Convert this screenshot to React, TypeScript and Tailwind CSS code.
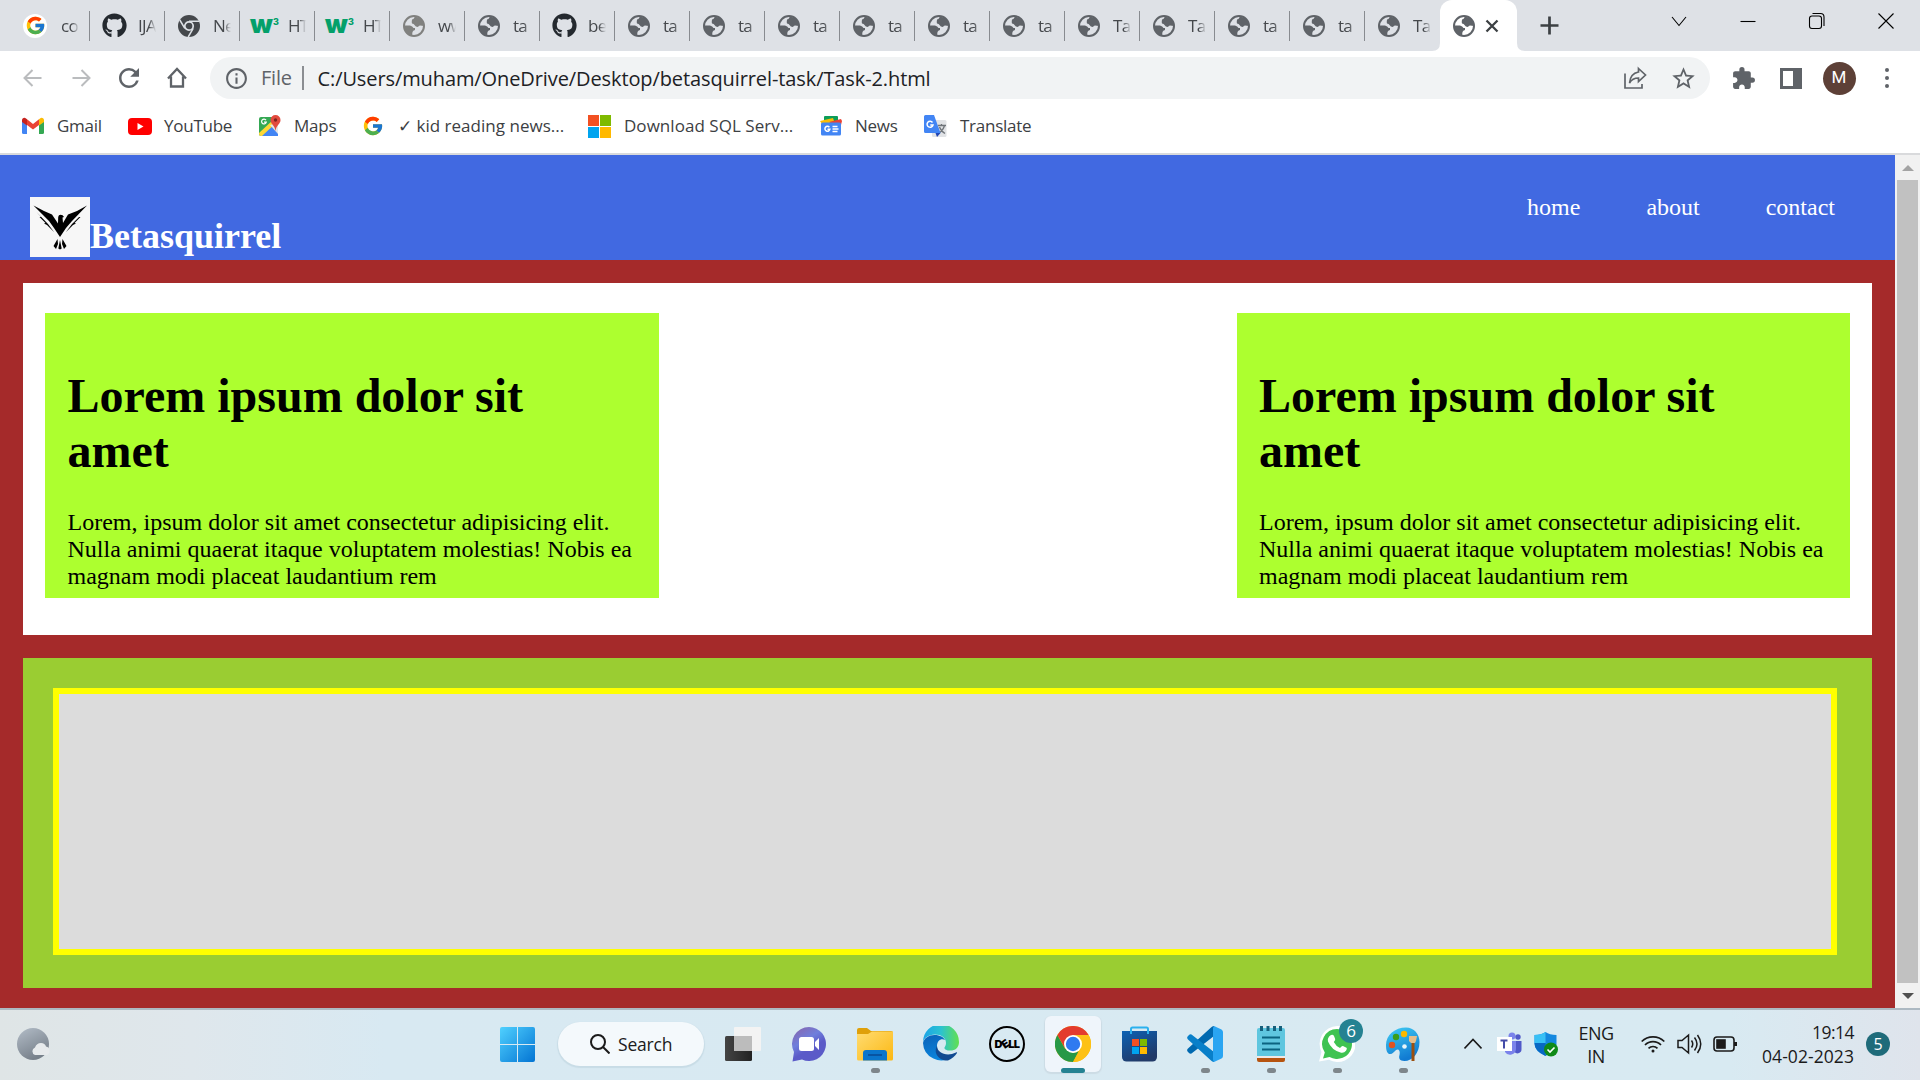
import React from "react";
import { FaGithub } from "react-icons/fa";
import { FcGoogle } from "react-icons/fc";
import { MdRefresh, MdInfoOutline, MdStarBorder, MdExtension } from "react-icons/md";

const ui = "font-['Open_Sans','Noto_Sans',sans-serif]";

function ChromeGrey() {
  return (
    <svg width="22" height="22" viewBox="0 0 22 22">
      <circle cx="11" cy="11" r="11" fill="#45484c" />
      <circle cx="11" cy="11" r="4.2" fill="#45484c" stroke="#dee1e6" strokeWidth="1.7" />
      <path d="M11 6.2H21M6.8 13.4L1.8 5M15.2 13.4L10.2 22" stroke="#dee1e6" strokeWidth="1.5" fill="none" />
    </svg>
  );
}

function Globe({ color = "#5f6368", land = "#dee1e6" }: { color?: string; land?: string }) {
  return (
    <svg className="shrink-0" width="22" height="22" viewBox="0 0 22 22">
      <circle cx="11" cy="11" r="10" fill={land} stroke={color} strokeWidth="2" />
      <path d="M12 1.500q-1 2.500-3 3Q8.500 7 9 8.500q2 0 2.500 1.500 1 2 3.500 2 .5-1.500 2-1.500l4 .5Q20.500 3 12 1.500z" fill={color} />
      <path d="M1.500 10.500h5.500q2.500.5 3.500 2.500h1.500v2q-2 .5-2.500 2l-.5 3.500Q1 18 1.500 10.500z" fill={color} />
    </svg>
  );
}

function W3() {
  return (
    <span className="relative flex h-6 w-6 items-center text-[#04a06a] font-[Inter,sans-serif]">
      <span className="-mt-[3px] -ml-[2px] text-[26px] leading-none font-black tracking-tighter">w</span>
      <span className="absolute -right-[3px] top-[3px] text-[9px] leading-none font-extrabold">3</span>
    </span>
  );
}

const globe = <Globe />;
const hub = <FaGithub size={25} color="#24292f" />;

const tabs: { icon: React.ReactNode; text: string }[] = [
  { icon: <span className="-ml-1.5 flex size-6 items-center justify-center rounded-full bg-white"><FcGoogle size={21} /></span>, text: "co" },
  { icon: hub, text: "IJA" },
  { icon: <ChromeGrey />, text: "Ne" },
  { icon: <W3 />, text: "HT" },
  { icon: <W3 />, text: "HT" },
  { icon: <Globe color="#80817f" />, text: "ww" },
  { icon: globe, text: "ta" },
  { icon: hub, text: "be" },
  { icon: globe, text: "ta" },
  { icon: globe, text: "ta" },
  { icon: globe, text: "ta" },
  { icon: globe, text: "ta" },
  { icon: globe, text: "ta" },
  { icon: globe, text: "ta" },
  { icon: globe, text: "Ta" },
  { icon: globe, text: "Ta" },
  { icon: globe, text: "ta" },
  { icon: globe, text: "ta" },
  { icon: globe, text: "Ta" },
];

function TabStrip() {
  return (
    <div className="flex h-[51px] bg-[#dee1e6] pl-[15px]">
      {tabs.map((t, i) => (
        <div key={i} className="flex h-[51px] w-[75px] shrink-0 items-center">
          <div className={i === 0 ? "flex w-[46px] shrink-0 items-center justify-center" : "flex w-[48px] shrink-0 items-center justify-center"}>{t.icon}</div>
          <div className="w-[18px] shrink-0 overflow-hidden whitespace-nowrap text-[17px] tracking-[-0.7px] text-[#45484c] [mask-image:linear-gradient(90deg,#000_60%,transparent)]">
            {t.text}
          </div>
          <div className={i === 18 ? "hidden" : "ml-auto h-[30px] w-[1.5px] bg-[#888b90]"} />
        </div>
      ))}
      <div className="relative flex w-[77px] shrink-0 items-center rounded-t-xl bg-white pl-[13px]">
        <svg className="absolute bottom-0 -left-2" width="8" height="8"><path d="M8 0V8H0Q8 8 8 0" fill="#fff" /></svg>
        <svg className="absolute bottom-0 -right-2" width="8" height="8"><path d="M0 0V8H8Q0 8 0 0" fill="#fff" /></svg>
        <Globe land="#ffffff" />
        <svg className="ml-[10px]" width="14" height="14" viewBox="0 0 14 14"><path d="M1.5 1.5l11 11M12.5 1.5l-11 11" stroke="#3c4043" strokeWidth="2.3" /></svg>
      </div>
      <svg className="mt-4 ml-[23px]" width="19" height="19"><path d="M9.5 0.5v18M.5 9.5h18" stroke="#3c4043" strokeWidth="2.7" /></svg>
      <div className="mt-[6px] ml-auto flex h-[30px] text-black">
        {["M2 8l7 8.500 7-8.500", "M1.500 12.500h15", "", "M1.500 4.500l15 15M16.500 4.500l-15 15"].map((d, i) => (
          <div key={i} className="flex w-[69px] items-center justify-center">
            <svg width="18" height="24" viewBox="0 0 18 24" fill="none" stroke="#000" strokeWidth="1.1">
              {i === 2 ? (
                <>
                  <rect x="1.500" y="7" width="12" height="12.500" rx="2.500" />
                  <path d="M4.500 4.500h8a3.500 3.500 0 0 1 3.500 3.500v9" />
                </>
              ) : <path d={d} />}
            </svg>
          </div>
        ))}
      </div>
    </div>
  );
}

function Toolbar() {
  return (
    <div className="flex h-[54px] items-center bg-white pl-[9px] text-[#5f6368]">
      {["M20.500 12H4M11.500 4L3.500 12l8 8", "M3.500 12H20M12.500 4l8 8-8 8"].map((d) => (
        <div key={d} className="flex w-12 justify-center">
          <svg width="24" height="24" fill="none" stroke="#babcbe" strokeWidth="2"><path d={d} /></svg>
        </div>
      ))}
      <div className="flex w-12 justify-center"><MdRefresh size={30} /></div>
      <div className="flex w-12 justify-center">
        <svg width="24" height="24" fill="none" stroke="#5f6368" strokeWidth="2.300"><path d="M3 12.500L12 3l9 9.500M6 10.500V20.500h12V10.500" /></svg>
      </div>
      <div className="ml-[9px] flex h-[42px] w-[1500px] items-center rounded-full bg-[#f1f3f4] pl-[14px]">
        <MdInfoOutline size={25} />
        <span className="ml-[12px] w-[31px] text-[20px] tracking-[-0.2px]">File</span>
        <span className="ml-[10px] h-6 w-[1.5px] bg-[#8b8e92]" />
        <span className="ml-[14px] mt-px whitespace-nowrap text-[20px] tracking-[-0.1px] text-[#202124]">
          C:/Users/muham/OneDrive/Desktop/betasquirrel-task/Task-2.html
        </span>
        <div className="ml-auto flex items-center pr-[3px]">
          <div className="flex w-12 justify-center">
            <svg width="25" height="24" viewBox="0 0 25 24" fill="none" stroke="#5f6368" strokeWidth="1.700">
              <path d="M2 7.500V22h17v-4M15.500 2.500l7 6.500-7 6.500V12c-4.500 0-7 1.500-9 5 .5-6 3.500-10 9-11z" />
            </svg>
          </div>
          <div className="flex w-12 justify-center"><MdStarBorder size={27} /></div>
        </div>
      </div>
      <div className="ml-[9px] flex items-center">
        <div className="flex w-12 justify-center"><MdExtension size={25} /></div>
        <div className="flex w-12 justify-center">
          <div className="h-[21px] w-[22px] border-[3px] border-r-[9px] border-[#5f6368]" />
        </div>
        <div className="flex w-12 justify-center">
          <div className="flex size-[33px] items-center justify-center rounded-full bg-[#5d4037] font-[Roboto,sans-serif] text-[17px] text-white">M</div>
        </div>
        <div className="flex w-12 flex-col items-center gap-[4px]">
          <i className="size-[4px] rounded-full bg-[#5f6368]" />
          <i className="size-[4px] rounded-full bg-[#5f6368]" />
          <i className="size-[4px] rounded-full bg-[#5f6368]" />
        </div>
      </div>
    </div>
  );
}

const gmail = (
  <svg width="22" height="18" viewBox="0 0 22 18">
    <path d="M0 4l5 4v9H1.500A1.500 1.500 0 0 1 0 15.500z" fill="#4285f4" />
    <path d="M22 4l-5 4v9h3.500a1.500 1.500 0 0 0 1.500-1.500z" fill="#34a853" />
    <path d="M5 8V2.300L11 7l6-4.700V8l-6 4.600z" fill="#ea4335" />
    <path d="M0 5V3A2.300 2.300 0 0 1 4 1.500L5 2.300V8.500z" fill="#c5221f" />
    <path d="M22 5V3a2.300 2.300 0 0 0-4-1.500l-1 .8V8.500z" fill="#fbbc04" />
  </svg>
);
const youtube = (
  <svg width="24" height="17" viewBox="0 0 24 17"><rect width="24" height="17" rx="4" fill="#f00" /><path d="M9.500 5v7l6-3.500z" fill="#fff" /></svg>
);
const maps = (
  <svg width="22" height="22" viewBox="0 0 22 22">
    <rect x="0" y="2" width="19" height="19" rx="2" fill="#34a853" />
    <path d="M1 20L11 10l8 8v3H3z" fill="#4285f4" />
    <path d="M0 18L14 5l3 3L3 21H2a2 2 0 0 1-2-2z" fill="#fdd835" />
    <path d="M11 10l8 9V8z" fill="#e4e6e8" />
    <path d="M5 21l6-7 6 7z" fill="#4285f4" />
    <path d="M7 5.200a2.400 2.400 0 1 0 .3 2H5" stroke="#fff" strokeWidth="1.200" fill="none" />
    <path d="M16.500 0A5 5 0 0 0 11.500 5c0 4 4.300 5 5 11 .7-6 5-7 5-11a5 5 0 0 0-5-5" fill="#e24a3e" />
    <circle cx="16.500" cy="5" r="1.700" fill="#7b231e" />
  </svg>
);
const microsoft = (
  <svg width="23" height="23" viewBox="0 0 23 23">
    <path d="M0 0h11v11H0z" fill="#f25022" /><path d="M12 0h11v11H12z" fill="#7fba00" />
    <path d="M0 12h11v11H0z" fill="#00a4ef" /><path d="M12 12h11v11H12z" fill="#ffb900" />
  </svg>
);
const news = (
  <svg width="22" height="20" viewBox="0 0 22 20">
    <rect x="4" y="0" width="14" height="8" rx="1" fill="#0c9d58" />
    <path d="M0 5l13-3 2 6H2z" fill="#fbbc04" /><path d="M9 6l12-3 1 2-2 8z" fill="#ea4335" />
    <rect x="1" y="6.500" width="20" height="13" rx="1.500" fill="#4285f4" />
    <path d="M9.400 11.200a2.500 2.500 0 1 0 .5 2H7.500" stroke="#fff" strokeWidth="1.500" fill="none" />
    <path d="M12.500 10.500h5M12.500 13h6M12.500 15.500h5" stroke="#fff" strokeWidth="1.300" />
  </svg>
);
const translate = (
  <svg width="23" height="23" viewBox="0 0 23 23">
    <rect x="8" y="5" width="14.500" height="17" rx="1.500" fill="#e1e3e6" />
    <path d="M14 10.500h8M17.500 9v1.500M20.500 10.500c-1 4-3 6-6 8M15.500 12c1 3 3 5 5.500 6.500" stroke="#70757a" strokeWidth="1.300" fill="none" />
    <path d="M1.500 0H10l6.500 18H1.500A1.500 1.500 0 0 1 0 16.500v-15A1.500 1.500 0 0 1 1.500 0" fill="#4285f4" />
    <path d="M11.500 18h5L13 22z" fill="#2146b5" />
    <path d="M8.500 7.500a3 3 0 1 0 .5 2.500H6.300" stroke="#fff" strokeWidth="1.500" fill="none" />
  </svg>
);

function Bookmark({ icon, text, box, fit = "tracking-[-0.25px]" }: { icon: React.ReactNode; text: string; box: string; fit?: string }) {
  return (
    <div className={"flex shrink-0 items-center whitespace-nowrap " + box}>
      <div className="flex w-6 shrink-0 justify-center">{icon}</div>
      <span className={"ml-[12px] text-[17px] text-[#3c4043] " + fit}>{text}</span>
    </div>
  );
}

function Bookmarks() {
  return (
    <div className="flex h-12 items-center bg-white pb-[6px] pl-[21px]">
      <Bookmark icon={gmail} text="Gmail" box="w-[107px]" />
      <Bookmark icon={youtube} text="YouTube" box="w-[130px]" />
      <Bookmark icon={maps} text="Maps" box="w-[103px]" />
      <Bookmark icon={<FcGoogle size={22} />} text="✓ kid reading news..." box="w-[226px]" fit="pl-px tracking-[0.02px]" />
      <Bookmark icon={microsoft} text="Download SQL Serv..." box="w-[232px]" fit="pl-px tracking-[0.04px]" />
      <Bookmark icon={news} text="News" box="w-[104px]" />
      <Bookmark icon={translate} text="Translate" box="w-[120px]" fit="pl-px tracking-[-0.25px]" />
    </div>
  );
}

function Bird() {
  return (
    <svg width="60" height="60" viewBox="0 0 60 60">
      <rect width="60" height="60" fill="#f7f7f7" />
      <g fill="#000">
        <path d="M30 40L24 31 19 24 3.500 8.500 14 14 22 17.500 28 26.500 28.200 20Q28.500 17.800 30.500 17.800 33 17.800 34 20L32.500 20.500 33 26 38 17.500 47 14 57 8.500 42 24 36 31z" />
        <path d="M6.500 15l11.500 12 6 8-7-7-3-1.500 1.500-.5-6-6 1.500 0zM54 15L42 27l-6 8 7-7 3-1.500-1.500-.5 6-6-1.500 0z" />
        <path d="M27.500 42l-4 7 2.500 3 2-5zM32.500 42l4 7-2.500 3-2-5zM30 43l-1.700 8.500 1.700 1 1.700-1z" />
      </g>
    </svg>
  );
}

function Card({ size }: { size: string }) {
  return (
    <div className={"h-[285px] bg-[#adff2f] pt-[55px] text-black " + size}>
      <h1 className="text-[48px] leading-[55px] font-bold">Lorem ipsum dolor sit<br />amet</h1>
      <p className="mt-[31px] text-[24px] leading-[27px]">
        Lorem, ipsum dolor sit amet consectetur adipisicing elit. Nulla animi quaerat itaque voluptatem molestias! Nobis ea magnam modi placeat laudantium rem
      </p>
    </div>
  );
}

function Page() {
  return (
    <div className="flex h-[853px]">
      <div className="w-[1895px] bg-[#a52a2a] font-['Liberation_Serif',serif]">
        <header className="flex h-[105px] justify-between bg-[#4169e1] pl-[30px] text-white">
          <div className="flex pt-[42px]">
            <Bird />
            <h2 className="mt-[19px] text-[36px] leading-[41px] font-bold">Betasquirrel</h2>
          </div>
          <nav className="flex gap-[66px] pt-[39px] pr-[60px] text-[24px] leading-[27px]">
            <a>home</a><a>about</a><a>contact</a>
          </nav>
        </header>
        <main className="px-[23px] pt-[23px]">
          <section className="flex h-[352px] justify-between bg-white px-[22px] pt-[30px]">
            <Card size="w-[614px] pl-[22.5px] pr-[22px]" />
            <Card size="w-[613px] pl-[22px] pr-[22px]" />
          </section>
          <section className="mt-[23px] h-[330px] bg-[#9acd32] pt-[30px] pr-[35px] pl-[30px]">
            <div className="h-[267px] border-[6px] border-[#ffff00] bg-[#dcdcdc]" />
          </section>
        </main>
      </div>
      <div className="flex w-[25px] flex-col items-center bg-[#f1f1f1]">
        <svg width="12" height="25"><path d="M0 16h12L6 10z" fill="#a3a3a3" /></svg>
        <div className="h-[803px] w-[21px] bg-[#c1c1c1]" />
        <svg width="12" height="25"><path d="M0 10h12L6 16z" fill="#505050" /></svg>
      </div>
    </div>
  );
}

const apps: { icon: React.ReactNode; state?: string }[] = [
  {
    icon: (
      <svg width="36" height="36"><defs><linearGradient id="tv"><stop stopColor="#444" /><stop offset="1" stopColor="#222" /></linearGradient></defs>
        <rect x="0" y="10" width="27" height="25" rx="1.500" fill="url(#tv)" /><rect x="9" y="1" width="27" height="24" rx="1" fill="#f3f3f3" /><path d="M9 10h18v15H9z" fill="#bcbcbc" />
      </svg>
    ),
  },
  {
    icon: (
      <svg width="34" height="36"><defs><linearGradient id="ch" x2=".6" y2="1"><stop stopColor="#8a63a8" /><stop offset=".45" stopColor="#6f7fdc" /><stop offset=".7" stopColor="#5b5bc8" /></linearGradient></defs>
        <path d="M17 1a17 17 0 1 1-7 32.500L.5 35.500 2 26A17 17 0 0 1 17 1" fill="url(#ch)" />
        <rect x="7" y="11" width="15" height="14" rx="2.500" fill="#fff" /><path d="M23 16l4-4v12l-4-4z" fill="#fff" />
      </svg>
    ),
  },
  {
    icon: (
      <svg width="36" height="36"><defs><linearGradient id="fo" x2="1" y2="1"><stop stopColor="#ffdc72" /><stop offset="1" stopColor="#fcb813" /></linearGradient></defs>
        <path d="M0 4a2 2 0 0 1 2-2h8l4 3h20a2 2 0 0 1 2 2v5H0z" fill="#dfa00a" /><path d="M0 8h11l4-2.500h21v27.500a1.500 1.500 0 0 1-1.500 1.500h-33A1.500 1.500 0 0 1 0 33z" fill="url(#fo)" />
        <path d="M6 34.500V27a3 3 0 0 1 3-3h18a3 3 0 0 1 3 3v7.500z" fill="#0a75cc" /><path d="M11 29h14" stroke="#0854a2" strokeWidth="2" />
      </svg>
    ),
    state: "open",
  },
  {
    icon: (
      <svg width="36" height="36" viewBox="0 0 36 36"><defs>
        <linearGradient id="e1"><stop stopColor="#1aa4e8" /><stop offset=".5" stopColor="#2cc2d0" /><stop offset="1" stopColor="#62e04f" /></linearGradient>
        <linearGradient id="e2" y2="1" x2=".3"><stop stopColor="#0b62b8" /><stop offset="1" stopColor="#0a84dc" /></linearGradient></defs>
        <path d="M0 16A18 18 0 0 1 36 16c0 6-4 8.500-8.500 8.500-4 0-6.500-1.500-6-3 .5-1.200 1.500-2 1.500-4.500C23 11.500 18 8.500 12 8.500 5 8.500 1 12.500 0 16" fill="url(#e1)" />
        <path d="M0 17C1 12 6 9 11.500 9 17 9 21 11.500 22 14c-4-2-8 1-8 6 0 8 7 13 15 10.500A18 18 0 0 1 0 17" fill="url(#e2)" />
        <path d="M14 20c-4 7 2 15 11 14.500 4-1.500 7-4.500 9-7.500.4-.8-.3-1-1-.5-9 4.500-19 .5-19-6.500" fill="#114a91" />
      </svg>
    ),
  },
  {
    icon: (
      <div className="flex size-9 items-center justify-center rounded-full border-2 border-black font-[Inter,sans-serif] text-[11px] font-black tracking-[-0.5px] text-black">
        D<span className="inline-block -rotate-[35deg]">E</span>LL
      </div>
    ),
  },
  {
    icon: (
      <svg width="36" height="36" viewBox="0 0 36 36">
        <circle cx="18" cy="18" r="18" fill="#fbbc09" />
        <path d="M18 36A18 18 0 0 1 2.400 9L10 22.500l8 4.500 5.500-1.500z" fill="#279847" />
        <path d="M2.400 9a18 18 0 0 1 31.200 0H18l-7.800 13.500z" fill="#e33b2e" />
        <path d="M18 9h15.600A18 18 0 0 1 18 36l7.800-13.500z" fill="#fdc116" />
        <circle cx="18" cy="18" r="9" fill="#fff" /><circle cx="18" cy="18" r="7.200" fill="#2f7af0" />
      </svg>
    ),
    state: "active",
  },
  {
    icon: (
      <svg width="35" height="36"><defs><linearGradient id="st" x2=".5" y2="1"><stop stopColor="#0c61b4" /><stop offset="1" stopColor="#223a68" /></linearGradient></defs>
        <path d="M9 8V3a1.500 1.500 0 0 1 1.500-1.500h14A1.500 1.500 0 0 1 26 3v5" fill="none" stroke="#2bb1ee" strokeWidth="2" />
        <path d="M0 5h35v26a4.500 4.500 0 0 1-4.500 4.500h-26A4.500 4.500 0 0 1 0 31z" fill="url(#st)" /><path d="M9 5v3M26 5v3" stroke="#2bb1ee" strokeWidth="2" />
        <path d="M10 13h7v7h-7z" fill="#f25022" /><path d="M18 13h7v7h-7z" fill="#7fba00" /><path d="M10 21h7v7h-7z" fill="#00a4ef" /><path d="M18 21h7v7h-7z" fill="#ffb900" />
      </svg>
    ),
  },
  {
    icon: (
      <svg width="36" height="36" viewBox="0 0 36 36">
        <path d="M27 0v10L4.500 27.500Q3 28 2 27L.6 25.500Q-.5 24 1 22.500L24 1.500Q25 .3 27 0" fill="#0069b0" />
        <path d="M27 36V26L4.500 8.500Q3 8 2 9L.6 10.500Q-.5 12 1 13.500L24 34.500Q25 35.700 27 36" fill="#087fc9" />
        <path d="M27 0l7.500 3.500Q36 4.500 36 6v24q0 1.500-1.500 2.500L27 36l-1-2V2z" fill="#2aa5f2" />
      </svg>
    ),
    state: "open",
  },
  {
    icon: (
      <svg width="28" height="36"><path d="M0 4a2 2 0 0 1 2-2h24a2 2 0 0 1 2 2v26H0z" fill="#5fc6df" /><path d="M0 30h28v2H0z" fill="#f0e8e5" /><path d="M0 32h28v2a2 2 0 0 1-2 2H2a2 2 0 0 1-2-2z" fill="#b65410" />
        <path d="M5 11.500h18M5 17.500h18M5 23.500h18" stroke="#0b6380" strokeWidth="2" /><path d="M4.500 0v5M11 0v5M17.500 0v5M23.500 0v5" stroke="#165f7b" strokeWidth="3" />
      </svg>
    ),
    state: "open",
  },
  {
    icon: (
      <div className="relative size-9">
        <svg width="36" height="36"><path d="M18 0a18 18 0 1 1-8 33.800L0 35.500 2.500 26A18 18 0 0 1 18 0" fill="#fff" /><path d="M18 3a15 15 0 1 1-7.500 28L4 32.500 5.800 26.500A15 15 0 0 1 18 3" fill="#3fc351" />
          <path d="M12 9q2-1 3 1l1.200 3q.4 1-1.400 3 2 4 6.200 6 2-2.500 3-2l3.500 1.800q1 .7-.5 3-2 2.500-5.500 1.700-9-2.500-12.500-11Q8 11.500 12 9" fill="#fff" /></svg>
        <div className="absolute -top-[7px] left-[20px] flex size-6 items-center justify-center rounded-full bg-[#258292] text-[17px] text-white">6</div>
      </div>
    ),
    state: "open",
  },
  {
    icon: (
      <svg width="36" height="36"><defs><linearGradient id="pa" x2=".4" y2="1"><stop stopColor="#41cdf4" /><stop offset="1" stopColor="#117bd2" /></linearGradient></defs>
        <path d="M21 1.500C29 1.500 34.500 8 34.500 16c0 11-7 19-15 19-5 0-6-3-5-6 1-4-1-7-4-4.500-2 1.500-3 4-6 3.500C2 27.500 1 24 1 19 1 9 10 1.500 21 1.500" fill="url(#pa)" />
        <circle cx="7" cy="19" r="3.200" fill="#df5323" /><circle cx="11" cy="11" r="3.200" fill="#3a9d19" /><circle cx="19" cy="8" r="3.200" fill="#fcb900" /><circle cx="19.500" cy="20.500" r="2.300" fill="#e6f5fb" />
        <path d="M24 10h8l-1 5-1 2h-4l-2-2z" fill="#e6bd8b" /><path d="M26.500 17h3v18h-3z" fill="#9c5010" />
      </svg>
    ),
    state: "open",
  },
];

function Taskbar() {
  return (
    <div className="relative flex h-[72px] items-center border-t-2 border-[#adb9c2] bg-[linear-gradient(90deg,#dfe5e6_0%,#dfe7ec_10%,#d8e9f2_20%,#d8eaf2_90%,#dfe4ec_100%)] pb-[2px] text-[#1b1b1b]">
      <svg className="ml-[17px]" width="34" height="34">
        <defs><linearGradient id="mo" x2=".5" y2="1"><stop stopColor="#b3bdc8" /><stop offset="1" stopColor="#77808a" /></linearGradient></defs>
        <circle cx="16" cy="17" r="16" fill="url(#mo)" /><path d="M18 28a4 4 0 0 1 0-7.500q1.500-4.500 6-4.500 4 0 5 3.500a4.500 4.500 0 0 1 1 8.500z" fill="#e7eaec" />
      </svg>
      <svg className="ml-[449px]" width="35" height="35">
        <defs><linearGradient id="wi" x2="1" y2="1" gradientUnits="objectBoundingBox"><stop stopColor="#50d1ff" /><stop offset="1" stopColor="#0374d3" /></linearGradient></defs>
        <path d="M2 0h15v17H0V2a2 2 0 0 1 2-2M18 0h15a2 2 0 0 1 2 2v15H18zM0 18h17v17H2a2 2 0 0 1-2-2zM18 18h17v15a2 2 0 0 1-2 2H18z" fill="url(#wi)" />
      </svg>
      <div className="ml-[23px] flex h-11 w-[146px] items-center rounded-full bg-[#f4f9fc] pl-8 shadow-[0_1px_1px_1px_#c8dce6]">
        <svg width="20" height="20" fill="none" stroke="#1b1b1b" strokeWidth="2"><circle cx="8" cy="8" r="7" /><path d="M13 13l6.500 6.500" /></svg>
        <span className="ml-2 text-[17.5px] tracking-[-0.2px]">Search</span>
      </div>
      <div className="ml-[6px] flex">
        {apps.map((a, i) => (
          <div key={i} className="flex w-[66px] justify-center">
            <div className={a.state === "active" ? "relative flex h-14 w-14 items-center justify-center rounded-md bg-[#eff5fb] shadow-[0_1px_1px_1px_#cddce5]" : "relative flex h-14 w-14 items-center justify-center"}>
              {a.icon}
              {a.state && <i className={a.state === "active" ? "absolute -bottom-px left-4 h-[5px] w-6 rounded-full bg-[#258292]" : "absolute -bottom-px left-[24px] h-[5px] w-[9px] rounded-full bg-[#7e868b]"} />}
            </div>
          </div>
        ))}
      </div>
      <svg className="ml-[28px]" width="18" height="12" fill="none" stroke="#1b1b1b" strokeWidth="1.600"><path d="M.5 10.500L9 1.500l8.500 9" /></svg>
      <svg className="ml-[15px]" width="25" height="24">
        <circle cx="15" cy="4" r="3.500" fill="#7b83eb" /><circle cx="21" cy="5" r="2.700" fill="#5059c9" /><path d="M16 9h8.500v8a4 4 0 0 1-7 3z" fill="#5059c9" /><path d="M8 9h11v8a6 6 0 0 1-11 3z" fill="#7b83eb" />
        <path d="M0 5h15v14H0z" fill="#fff" /><path d="M3.500 8.500h7M7 8.500v8" stroke="#444ba8" strokeWidth="2" />
      </svg>
      <svg className="ml-[12px]" width="24" height="26">
        <path d="M11.500 1q4 3 11 3v9q0 7-11 12Q.500 20 .500 13V4q7 0 11-3" fill="#1488df" /><path d="M11.500 1v11H.500V4q7 0 11-3" fill="#38c0f5" /><path d="M11.500 12v13Q.500 20 .500 12z" fill="#0868c4" />
        <circle cx="17" cy="18.500" r="7" fill="#108a18" /><path d="M13.500 18.500l2.500 2.500 4.500-4.500" stroke="#fff" strokeWidth="1.600" fill="none" />
      </svg>
      <div className="ml-[18px] w-[40px] pt-px text-center text-[18px] leading-[23px] tracking-[-0.5px]">ENG<br />IN</div>
      <svg className="ml-[25px]" width="24" height="20" fill="none" stroke="#1b1b1b" strokeWidth="1.700"><path d="M.7 7.500a16 16 0 0 1 22.600 0M4 11a11 11 0 0 1 16 0M7.500 14.300a6.500 6.500 0 0 1 9 0" /><circle cx="12" cy="17" r="1.500" fill="#1b1b1b" stroke="none" /></svg>
      <svg className="ml-[12px]" width="25" height="22" fill="none" stroke="#1b1b1b" strokeWidth="1.500"><path d="M1 7.500h4L11.500 2v18L5 14.500H1zM14.500 7.500q2.500 3.500 0 7M17.500 4.500q5 6.500 0 13M20.500 2q6.500 9 0 18" /></svg>
      <svg className="ml-[11px]" width="25" height="18" fill="none" stroke="#1b1b1b" strokeWidth="1.600"><rect x="1" y="2" width="20" height="14" rx="3" /><rect x="4" y="5" width="8" height="8" fill="#1b1b1b" /><path d="M22.500 7v4" strokeWidth="3" /></svg>
      <div className="ml-auto -mt-px text-right text-[17.5px] leading-[24px]"><span className="tracking-[-0.5px]">19:14</span><br /><span className="tracking-[0.07px]">04-02-2023</span></div>
      <div className="ml-[12px] mr-[30px] flex size-6 items-center justify-center rounded-full bg-[#1f6b7a] text-[16px] text-white">5</div>
    </div>
  );
}

export default function App() {
  return (
    <div className={"h-[1080px] w-[1920px] overflow-hidden bg-white " + ui}>
      <TabStrip />
      <Toolbar />
      <Bookmarks />
      <div className="h-[2px] bg-[#d9dadc]" />
      <Page />
      <Taskbar />
    </div>
  );
}
